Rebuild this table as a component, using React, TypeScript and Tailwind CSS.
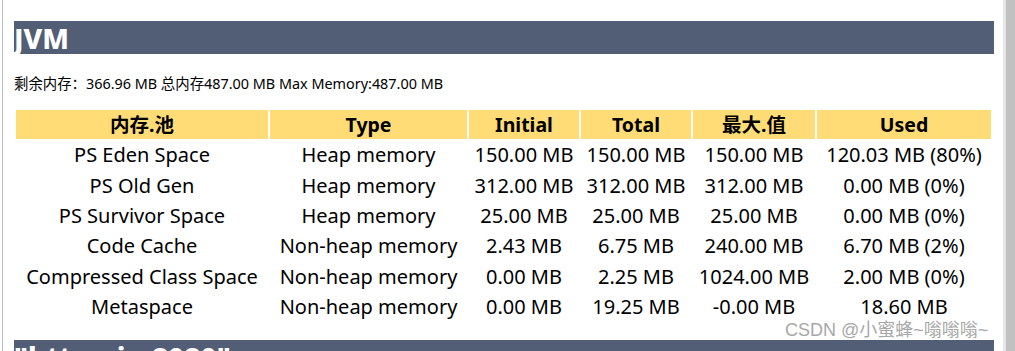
const rows = [
  ["PS Eden Space", "Heap memory", "150.00 MB", "150.00 MB", "150.00 MB", "120.03 MB (80%)"],
  ["PS Old Gen", "Heap memory", "312.00 MB", "312.00 MB", "312.00 MB", "0.00 MB (0%)"],
  ["PS Survivor Space", "Heap memory", "25.00 MB", "25.00 MB", "25.00 MB", "0.00 MB (0%)"],
  ["Code Cache", "Non-heap memory", "2.43 MB", "6.75 MB", "240.00 MB", "6.70 MB (2%)"],
  ["Compressed Class Space", "Non-heap memory", "0.00 MB", "2.25 MB", "1024.00 MB", "2.00 MB (0%)"],
  ["Metaspace", "Non-heap memory", "0.00 MB", "19.25 MB", "-0.00 MB", "18.60 MB"],
];

const headers = ["内存.池", "Type", "Initial", "Total", "最大.值", "Used"];

export default function App() {
  return (
    <div
      className="relative flex h-[351px] w-[1015px] overflow-hidden bg-white text-black"
      style={{ fontFamily: '"Noto Sans", "Noto Sans CJK SC", sans-serif' }}
    >
      {/* page edge */}
      <div className="ml-[2px] w-px bg-[#bcbcbc]" />

      {/* status page content */}
      <div className="flex-1 pl-[11px] pr-[9px] pt-[21px]">
        <h1 className="h-[33px] bg-[#525D76] text-[28px] font-extrabold leading-[35px] text-white">
          JVM
        </h1>

        <p className="mt-[21px] text-[14.4px] leading-[18px]">
          剩余内存：366.96 MB 总内存487.00 MB Max Memory:487.00 MB
        </p>

        <table className="mt-[15px] w-[979px] table-fixed border-separate border-spacing-[2px]">
          <colgroup>
            <col className="w-[252px]" />
            <col className="w-[197px]" />
            <col className="w-[110px]" />
            <col className="w-[110px]" />
            <col className="w-[122px]" />
            <col className="w-[174px]" />
          </colgroup>
          <thead>
            <tr>
              {headers.map((h) => (
                <th
                  key={h}
                  className="h-[29px] bg-[#FFDC75] p-0 text-center text-[19.5px] font-bold leading-[29px]"
                >
                  {h}
                </th>
              ))}
            </tr>
          </thead>
          <tbody>
            {rows.map((r) => (
              <tr key={r[0]}>
                {r.map((c, i) => (
                  <td
                    key={i}
                    className="h-[28.4px] whitespace-nowrap p-0 text-center text-[20px] leading-[28px]"
                  >
                    {c}
                  </td>
                ))}
              </tr>
            ))}
          </tbody>
        </table>

        <h1 className="mt-[17px] h-[33px] bg-[#525D76] text-[28px] font-extrabold leading-[35px] text-white">
          "http-nio-8080"
        </h1>
      </div>

      {/* scrollbar */}
      <div className="w-[3px] bg-[#e6e6e6]" />
      <div className="w-[9px] bg-[#c1c1c1]" />

      {/* watermark */}
      <div
        className="absolute left-[785px] top-[318px] text-[18px] leading-[24px] text-[#a8a8a8]"
        style={{ fontFamily: '"Liberation Sans", "Noto Sans CJK SC", sans-serif' }}
      >
        CSDN @小蜜蜂~嗡嗡嗡~
      </div>
    </div>
  );
}
